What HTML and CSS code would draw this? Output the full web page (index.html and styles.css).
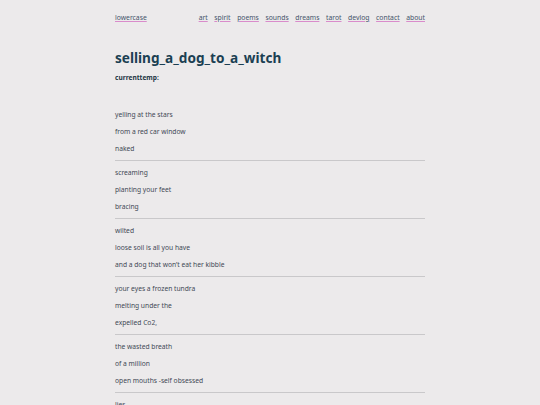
FILE: index.html
```html
<!DOCTYPE html>
<html>
<head>
<meta charset="utf-8">
<link rel="stylesheet" href="styles.css">
</head>
<body>
<div class="page">
  <header class="top">
    <a class="home" href="#">lowercase</a>
    <nav class="nav">
      <a href="#">art</a>
      <a href="#">spirit</a>
      <a href="#">poems</a>
      <a href="#">sounds</a>
      <a href="#">dreams</a>
      <a href="#">tarot</a>
      <a href="#">devlog</a>
      <a href="#">contact</a>
      <a href="#">about</a>
    </nav>
  </header>
  <h1 class="title">selling_a_dog_to_a_witch</h1>
  <p class="temp">currenttemp:</p>
  <div class="poem">
    <div class="stanza">
      <p>yelling at the stars</p>
      <p>from a red car window</p>
      <p>naked</p>
    </div>
    <div class="stanza">
      <p>screaming</p>
      <p>planting your feet</p>
      <p>bracing</p>
    </div>
    <div class="stanza">
      <p>wilted</p>
      <p>loose soil is all you have</p>
      <p>and a dog that won’t eat her kibble</p>
    </div>
    <div class="stanza">
      <p>your eyes a frozen tundra</p>
      <p>melting under the</p>
      <p>expelled Co2,</p>
    </div>
    <div class="stanza">
      <p>the wasted breath</p>
      <p>of a million</p>
      <p>open mouths -self obsessed</p>
    </div>
    <div class="stanza">
      <p>lies</p>
      <p>and more lies</p>
      <p>under the sky</p>
    </div>
  </div>
</div>
</body>
</html>
```
FILE: styles.css
```css
html, body {
  margin: 0;
  padding: 0;
  background: #eceaeb;
}
body {
  font-family: "Noto Sans", "Open Sans", sans-serif;
  color: #2e3d4a;
}
.page {
  width: 310px;
  margin: 0 auto;
}
.top {
  display: flex;
  justify-content: space-between;
  align-items: center;
  padding-top: 13px;
  font-size: 6.8px;
  line-height: 10px;
}
.nav {
  display: flex;
  gap: 6.6px;
}
.top a {
  color: #44536a;
  text-decoration: underline;
  text-decoration-color: #d98ccb;
  text-underline-offset: 1px;
}
.title {
  margin: 27px 0 0;
  font-size: 13.6px;
  line-height: 16px;
  font-weight: 700;
  color: #1b3f52;
}
.temp {
  margin: 7px 0 0;
  font-size: 6.6px;
  line-height: 10px;
  font-weight: 700;
  color: #1e3645;
}
.poem {
  margin-top: 23px;
}
.stanza {
  border-bottom: 1px solid #c9c8ca;
  padding-bottom: 3px;
  margin-bottom: 3px;
}
.stanza p {
  margin: 0;
  font-size: 6.7px;
  line-height: 17px;
  color: #3f4955;
}
```
